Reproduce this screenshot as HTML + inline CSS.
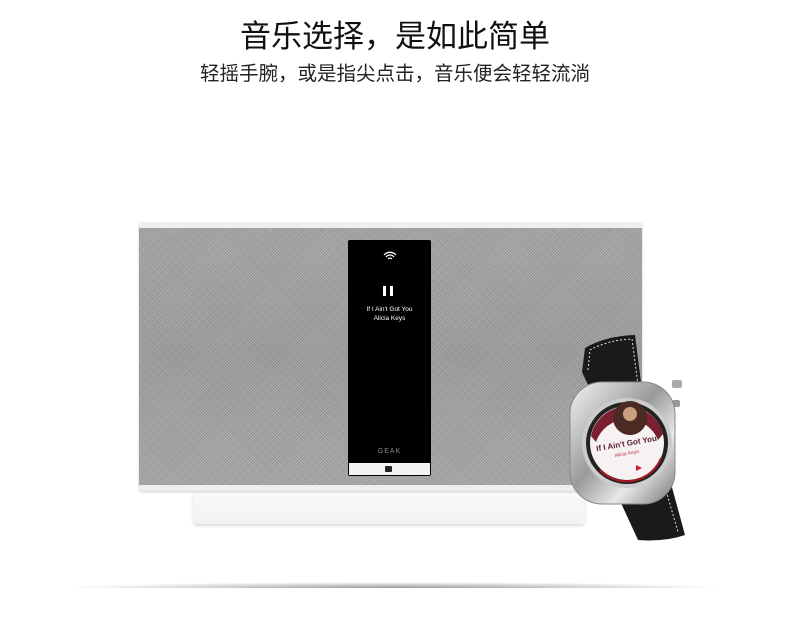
<!DOCTYPE html>
<html><head><meta charset="utf-8"><style>
*{margin:0;padding:0;box-sizing:border-box}
body{width:790px;height:643px;background:#fff;position:relative;overflow:hidden;font-family:"Liberation Sans","Noto Sans CJK SC",sans-serif}
.t1{position:absolute;top:17px;left:0;width:790px;text-align:center;font-size:31px;color:#111;line-height:40px}
.t2{position:absolute;top:62px;left:0;width:790px;text-align:center;font-size:19.5px;color:#222;line-height:24px}
.frame{position:absolute;left:139px;top:222px;width:503px;height:269px;background:#eee;border-radius:3px;box-shadow:0 1px 2px #ccc}
.grill{position:absolute;left:139px;top:228px;width:503px;height:257px;
background:repeating-linear-gradient(45deg,rgba(255,255,255,.18) 0 1px,transparent 1px 2px),repeating-linear-gradient(-45deg,rgba(0,0,0,.15) 0 1px,transparent 1px 2px),linear-gradient(#a6a6a6,#9e9e9e 50%,#a8a8a8)}
.base{position:absolute;left:193px;top:490px;width:392px;height:34px;background:linear-gradient(#fafafa,#f2f2f2);border-radius:0 0 4px 4px;box-shadow:0 2px 3px #ddd}
.screen{position:absolute;left:348px;top:240px;width:83px;height:236px;background:#000;border-radius:2px}
.strip{position:absolute;left:349px;top:463px;width:81px;height:12px;background:#f2f2f2}
.txt{position:absolute;left:348px;width:83px;text-align:center;color:#fff;font-size:6.5px}
.floor{position:absolute;left:60px;top:582px;width:670px;height:6px;background:radial-gradient(ellipse at 50% 100%,#999,rgba(255,255,255,0) 70%)}
</style></head><body>
<div class="t1">音乐选择，是如此简单</div>
<div class="t2">轻摇手腕，或是指尖点击，音乐便会轻轻流淌</div>
<div class="floor"></div>
<div class="base"></div>
<div class="frame"></div>
<div class="grill"></div>
<div class="screen"></div>
<svg style="position:absolute;left:383px;top:251px" width="14" height="10" viewBox="0 0 14 10"><path d="M1 4a8 8 0 0 1 12 0M3 6a5 5 0 0 1 8 0M5 8a2.5 2.5 0 0 1 4 0" stroke="#fff" stroke-width="1.3" fill="none"/></svg>
<div style="position:absolute;left:383px;top:286px;width:3px;height:10px;background:#fff"></div>
<div style="position:absolute;left:390px;top:286px;width:3px;height:10px;background:#fff"></div>
<div class="txt" style="top:306px">If I Ain't Got You</div>
<div class="txt" style="top:315px">Alicia Keys</div>
<div class="txt" style="top:448px;color:#888;font-size:7px;letter-spacing:1px">GEAK</div>
<div class="strip"></div>
<div style="position:absolute;left:385px;top:466px;width:7px;height:6px;background:#222;border-radius:1px"></div>
<svg style="position:absolute;left:560px;top:330px" width="130" height="215" viewBox="0 0 130 215">
<defs><linearGradient id="m" x1="0" y1="0" x2="1" y2="1"><stop offset="0" stop-color="#f4f4f4"/><stop offset=".45" stop-color="#9a9a9a"/><stop offset=".7" stop-color="#e8e8e8"/><stop offset="1" stop-color="#777"/></linearGradient></defs>
<path d="M22 42 L25 18 Q45 6 75 5 L82 60 L35 70Z" fill="#1a1a1a"/>
<path d="M28 40 L30 20 Q48 10 72 9 L78 55" stroke="#ddd" stroke-width="1" stroke-dasharray="2 2" fill="none"/>
<path d="M55 160 L110 150 L125 205 Q105 212 78 210Z" fill="#1a1a1a"/>
<path d="M62 165 L105 157 L118 202" stroke="#ddd" stroke-width="1" stroke-dasharray="2 2" fill="none"/>
<rect x="112" y="50" width="10" height="8" rx="2" fill="#aaa"/><rect x="112" y="70" width="8" height="7" rx="2" fill="#999"/>
<rect x="10" y="52" width="105" height="122" rx="32" fill="url(#m)" stroke="#888" stroke-width="1"/>
<circle cx="67" cy="113" r="45" fill="#ccc"/>
<circle cx="67" cy="113" r="41" fill="#222"/>
<circle cx="67" cy="113" r="37" fill="#f6f2f2"/>
<path d="M31 106 A37 37 0 0 1 103 104 L98 110 A33 33 0 0 0 36 112Z" fill="#7a2030"/>
<circle cx="70" cy="88" r="17" fill="#4a2a22"/>
<circle cx="70" cy="84" r="7" fill="#c9a080"/>
<text x="67" y="116" font-size="8" font-weight="bold" fill="#5a2030" text-anchor="middle" transform="rotate(-10 67 116)">If I Ain't Got You</text>
<text x="67" y="125" font-size="5" fill="#c03040" text-anchor="middle" transform="rotate(-10 67 125)">Alicia Keys</text>
<path d="M76 135 l6 3 -6 3z" fill="#c02030"/>
<path d="M40 140 A37 37 0 0 0 101 128" stroke="#b01828" stroke-width="2" fill="none"/>
</svg>
</body></html>
